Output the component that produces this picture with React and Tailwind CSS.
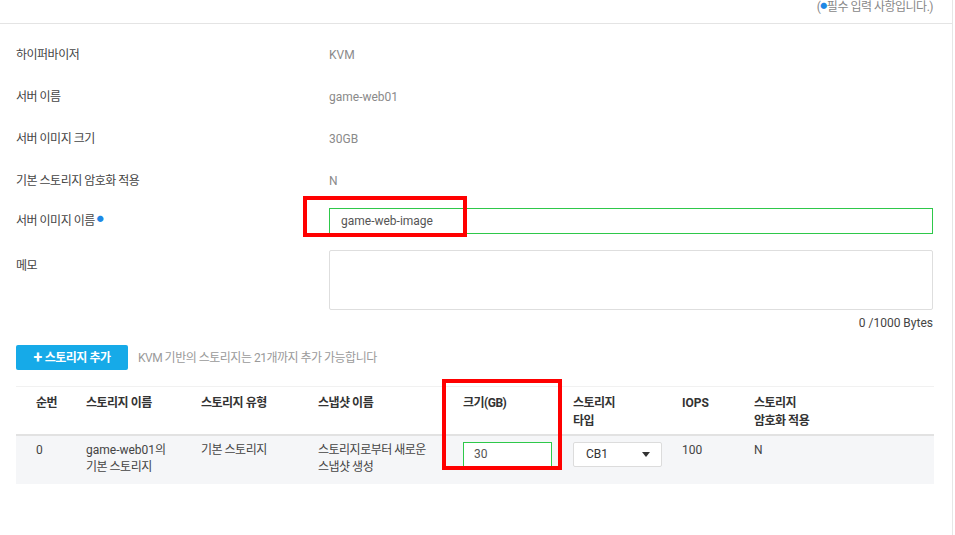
import React from "react";

const font = { fontFamily: 'Roboto, "Noto Sans CJK KR", "Noto Sans", sans-serif' };

function InfoRow({ label, value }) {
  return (
    <div className="flex h-[42px] items-center text-[12px]">
      <div className="w-[313px] text-[#444]">{label}</div>
      <div className="tracking-normal text-[#8a8a8a]">{value}</div>
    </div>
  );
}

const cols = ["w-[50px]", "w-[115px]", "w-[117px]", "w-[145px]", "w-[110px]", "w-[109px]", "w-[72px]", "flex-1"];

export default function App() {
  return (
    <div style={font} className="relative h-[535px] w-[955px] overflow-hidden bg-white text-[12px] tracking-[-0.5px]">
      <div className="h-full w-[953px] border-r border-[#e6e6e6]">
        {/* required note */}
        <div className="flex h-[24px] items-start justify-end border-b border-[#e4e4e4] pr-[19px] text-[#888]">
          <span className="leading-[15px]">
            (<span className="relative -top-[3px] text-[7px] text-[#1e88e5]">●</span>필수 입력 사항입니다.)
          </span>
        </div>

        <div className="pl-[16px] pr-[19px] pt-[10px]">
          <InfoRow label="하이퍼바이저" value="KVM" />
          <InfoRow label="서버 이름" value="game-web01" />
          <InfoRow label="서버 이미지 크기" value="30GB" />
          <InfoRow label="기본 스토리지 암호화 적용" value="N" />

          <div className="mt-[6px] flex items-center">
            <div className="w-[313px] text-[#444]">
              서버 이미지 이름
              <span className="relative -top-[4px] ml-[2px] text-[7px] text-[#1e88e5]">●</span>
            </div>
            <div className="flex h-[26px] flex-1 items-center border border-[#2ec84a] px-[11px] tracking-normal text-[#555]">
              game-web-image
            </div>
          </div>

          <div className="mt-[16px] flex items-start">
            <div className="w-[313px] pt-[7px] text-[#444]">메모</div>
            <div className="h-[60px] flex-1 rounded-[2px] border border-[#dedede]" />
          </div>
          <div className="mt-[5px] text-right leading-[16px] tracking-normal text-[#444]">0 /1000 Bytes</div>

          <div className="mt-[14px] flex items-center">
            <button className="flex h-[25px] w-[112px] items-center justify-center gap-[3px] rounded-[2px] bg-[#16aae8] font-bold text-white">
              <span className="text-[16px] font-bold leading-none">+</span>
              스토리지 추가
            </button>
            <span className="ml-[10px] text-[#9a9a9a]">KVM 기반의 스토리지는 21개까지 추가 가능합니다</span>
          </div>

          {/* storage table */}
          <div className="mt-[16px] w-[918px] border-t border-[#f1f1f1]">
            <div className="flex h-[49px] border-b-2 border-[#e2e2e2] pl-[20px] pt-[7px] font-bold leading-[18px] text-[#333]">
              <div className={cols[0]}>순번</div>
              <div className={cols[1]}>스토리지 이름</div>
              <div className={cols[2]}>스토리지 유형</div>
              <div className={cols[3]}>스냅샷 이름</div>
              <div className={cols[4]}>크기(GB)</div>
              <div className={cols[5]}>스토리지<br />타입</div>
              <div className={`${cols[6]} tracking-normal`}>IOPS</div>
              <div className={cols[7]}>스토리지<br />암호화 적용</div>
            </div>
            <div className="flex h-[48px] bg-[#f5f6f8] pl-[20px] pt-[6px] leading-[17px] text-[#444]">
              <div className={cols[0]}>0</div>
              <div className={cols[1]}><span className="tracking-normal">game-web01</span>의<br />기본 스토리지</div>
              <div className={cols[2]}>기본 스토리지</div>
              <div className={cols[3]}>스토리지로부터 새로운<br />스냅샷 생성</div>
              <div className={cols[4]}>
                <div className="flex h-[25px] w-[89px] items-center border border-[#2ec84a] bg-white px-[10px] tracking-normal text-[#555]">30</div>
              </div>
              <div className={cols[5]}>
                <div className="flex h-[25px] w-[89px] items-center justify-between rounded-[2px] border border-[#dcdcdc] bg-white pl-[12px] pr-[11px] tracking-normal text-[#333]">
                  CB1
                  <svg width="8" height="5" viewBox="0 0 8 5"><path d="M0 0h8L4 5z" fill="#333" /></svg>
                </div>
              </div>
              <div className={`${cols[6]} tracking-normal`}>100</div>
              <div className={cols[7]}>N</div>
            </div>
          </div>
        </div>
      </div>

      {/* highlight boxes */}
      <div className="pointer-events-none absolute left-[303px] top-[196px] h-[41px] w-[164px] border-[4px] border-[#ff0000]" />
      <div className="pointer-events-none absolute left-[442px] top-[379px] h-[91px] w-[120px] border-[4px] border-[#ff0000]" />
    </div>
  );
}
